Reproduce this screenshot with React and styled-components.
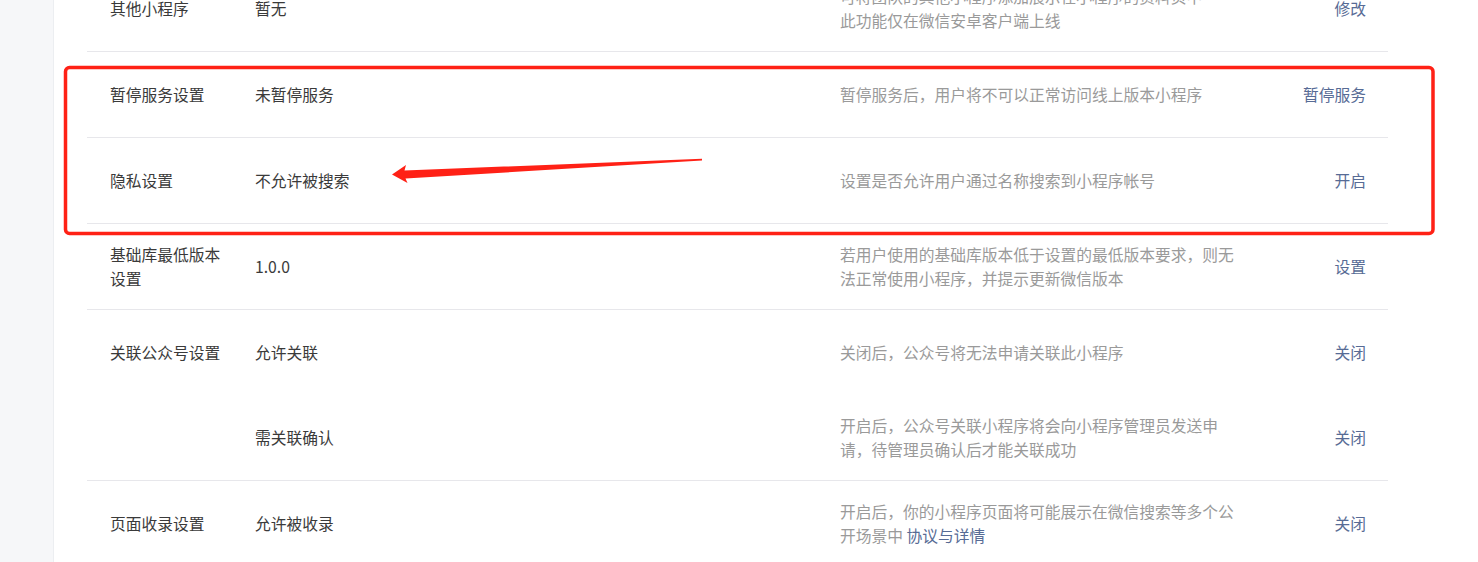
import React from "react";
import styled, { createGlobalStyle } from "styled-components";

const GlobalStyle = createGlobalStyle`
  html, body {
    margin: 0;
    padding: 0;
    background: #f6f7f9;
    overflow: hidden;
  }
  body {
    font-family: "Noto Sans CJK SC", "Noto Sans", sans-serif;
  }
`;

const Page = styled.div`
  position: relative;
  width: 1478px;
  height: 562px;
  overflow: hidden;
`;

const Panel = styled.div`
  margin-left: 53px;
  margin-top: -34px;
  width: 1367px;
  min-height: 700px;
  background: #fff;
  border-left: 1px solid #eceef1;
  border-right: 1px solid #eceef1;
  padding: 0 33px;
  box-sizing: content-box;
`;

const Table = styled.div`
  width: 1301px;
`;

const Row = styled.div`
  display: grid;
  grid-template-columns: 168px 1fr;
  border-bottom: ${(p) => (p.last ? "none" : "1px solid #e7e7eb")};
`;

const Label = styled.div`
  padding: 0 30px 0 23px;
  min-height: 85px;
  display: flex;
  align-items: center;
  font-size: 15.75px;
  line-height: 24px;
  color: #3a3a3a;
  align-self: start;
  box-sizing: border-box;
`;

const Items = styled.div`
  display: flex;
  flex-direction: column;
`;

const Item = styled.div`
  display: grid;
  grid-template-columns: 585px 400px 1fr;
  min-height: 85px;
  align-items: center;
  font-size: 15.75px;
  line-height: 24px;
`;

const Value = styled.div`
  color: #3a3a3a;
`;

const Desc = styled.div`
  color: #9a9a9a;
`;

const Link = styled.a`
  color: #576b95;
  text-decoration: none;
  cursor: pointer;
`;

const Action = styled.div`
  text-align: right;
  padding-right: 22px;
  color: #576b95;
  cursor: pointer;
`;

const Overlay = styled.svg`
  position: absolute;
  left: 0;
  top: 0;
  pointer-events: none;
`;

const rows = [
  {
    label: "其他小程序",
    items: [
      {
        value: "暂无",
        desc: (
          <>
            可将团队的其他小程序添加展示在小程序的资料页中
            <br />
            此功能仅在微信安卓客户端上线
          </>
        ),
        action: "修改",
      },
    ],
  },
  {
    label: "暂停服务设置",
    items: [
      {
        value: "未暂停服务",
        desc: "暂停服务后，用户将不可以正常访问线上版本小程序",
        action: "暂停服务",
      },
    ],
  },
  {
    label: "隐私设置",
    items: [
      {
        value: "不允许被搜索",
        desc: "设置是否允许用户通过名称搜索到小程序帐号",
        action: "开启",
      },
    ],
  },
  {
    label: "基础库最低版本设置",
    items: [
      {
        value: "1.0.0",
        desc: "若用户使用的基础库版本低于设置的最低版本要求，则无法正常使用小程序，并提示更新微信版本",
        action: "设置",
      },
    ],
  },
  {
    label: "关联公众号设置",
    items: [
      {
        value: "允许关联",
        desc: "关闭后，公众号将无法申请关联此小程序",
        action: "关闭",
      },
      {
        value: "需关联确认",
        desc: "开启后，公众号关联小程序将会向小程序管理员发送申请，待管理员确认后才能关联成功",
        action: "关闭",
      },
    ],
  },
  {
    label: "页面收录设置",
    items: [
      {
        value: "允许被收录",
        desc: (
          <>
            开启后，你的小程序页面将可能展示在微信搜索等多个公开场景中{" "}
            <Link>协议与详情</Link>
          </>
        ),
        action: "关闭",
      },
    ],
  },
];

export default function App() {
  return (
    <Page>
      <GlobalStyle />
      <Panel>
        <Table>
          {rows.map((row, i) => (
            <Row key={row.label} last={i === rows.length - 1}>
              <Label>{row.label}</Label>
              <Items>
                {row.items.map((it, j) => (
                  <Item key={j}>
                    <Value>{it.value}</Value>
                    <Desc>{it.desc}</Desc>
                    <Action>{it.action}</Action>
                  </Item>
                ))}
              </Items>
            </Row>
          ))}
        </Table>
      </Panel>
      <Overlay width="1478" height="562" viewBox="0 0 1478 562">
        <rect
          x="65.5"
          y="67.5"
          width="1367.5"
          height="166"
          rx="4"
          fill="none"
          stroke="#ff2116"
          strokeWidth="3.5"
        />
        <polygon
          points="392,174.5 406,165 404.5,170.5 702,158.8 702,160.6 405.5,178.5 407.5,183"
          fill="#ff2116"
        />
      </Overlay>
    </Page>
  );
}
